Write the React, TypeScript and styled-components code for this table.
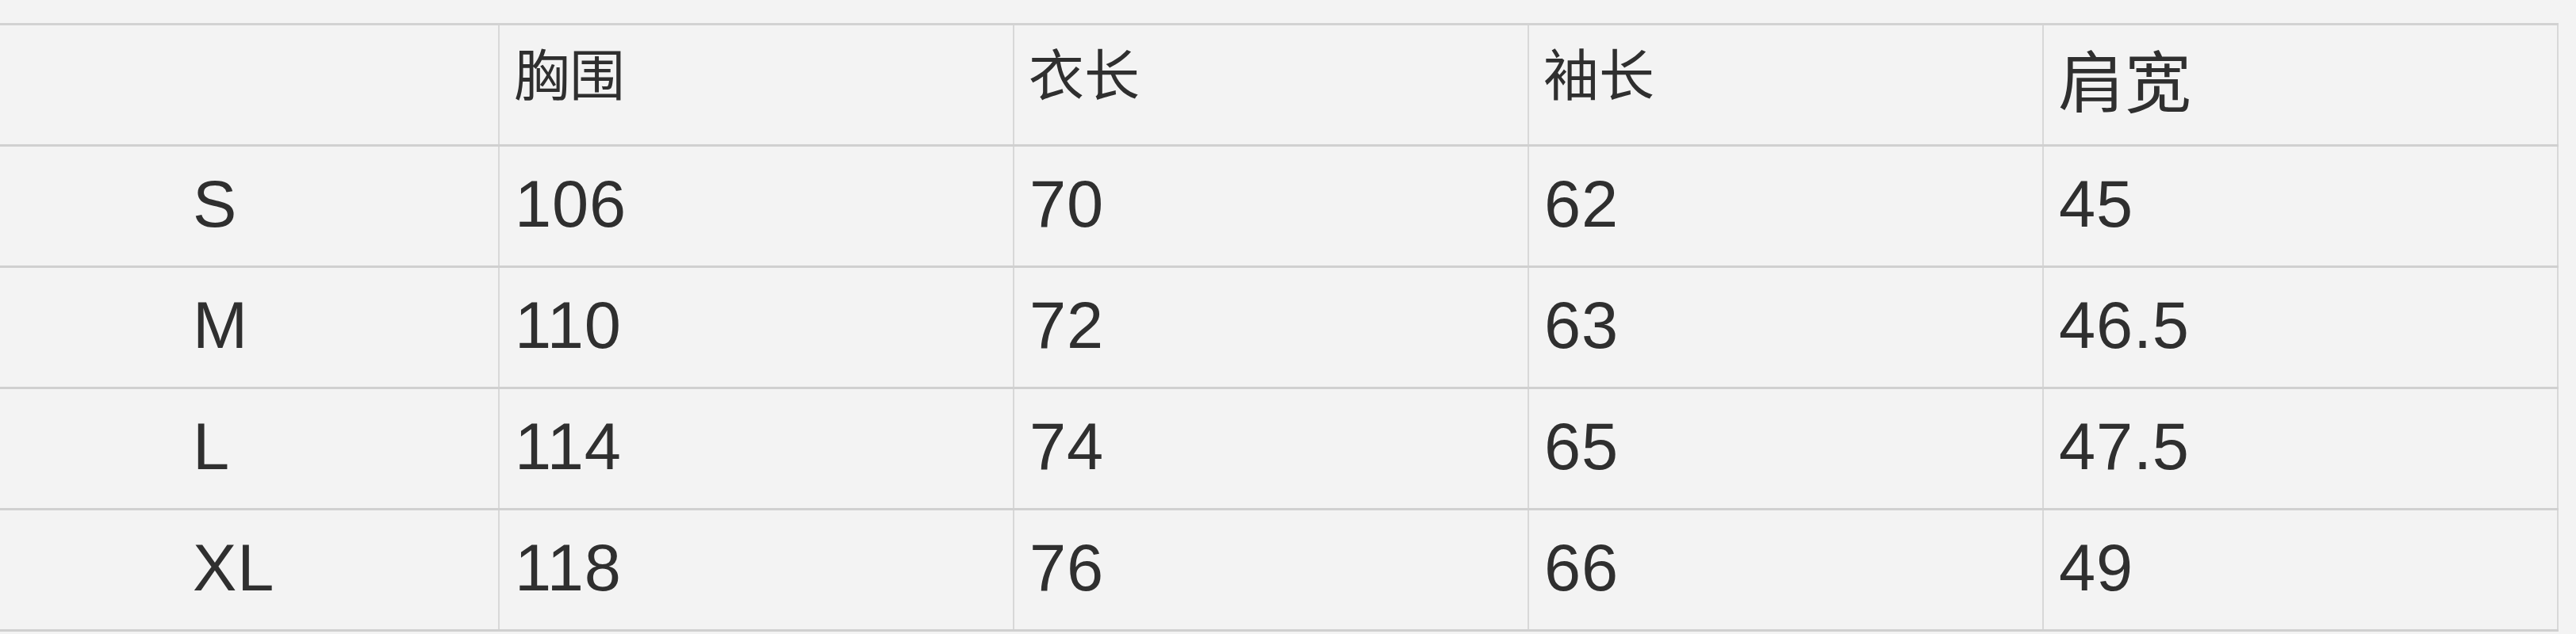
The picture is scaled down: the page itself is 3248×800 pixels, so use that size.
import React from 'react';
import styled, {createGlobalStyle} from 'styled-components';

const GlobalStyle = createGlobalStyle`
  html, body {
    margin: 0;
    padding: 0;
    background: #f3f3f3;
  }
  body {
    font-family: "Liberation Sans", "Noto Sans CJK SC", sans-serif;
    color: #2f2f2f;
  }
`;

const Sheet = styled.div`
  width: 3248px;
  height: 800px;
  padding-top: 29px;
  box-sizing: border-box;
  background: #f3f3f3;
  overflow: hidden;
`;

const Table = styled.div`
  width: 3226px;
  border-top: 3px solid #d2d2d2;
  display: flex;
  flex-direction: column;
`;

const Row = styled.div`
  display: grid;
  grid-template-columns: 630px repeat(4, 649px);
  height: 153px;
  box-sizing: border-box;
  border-bottom: 3px solid #d0d0d0;
`;

const Cell = styled.div<{$first?: boolean}>`
  display: flex;
  align-items: center;
  box-sizing: border-box;
  border-right: 2px solid #d8d8d8;
  padding-left: ${p => (p.$first ? '243px' : '19px')};
  padding-bottom: 4px;
  font-size: 83px;
  letter-spacing: 0.8px;
`;

const HeadCell = styled(Cell)<{$big?: boolean}>`
  font-family: "Noto Sans CJK SC", "Liberation Sans", sans-serif;
  font-size: ${p => (p.$big ? '84px' : '70px')};
  padding-bottom: ${p => (p.$big ? '18px' : '34px')};
  padding-left: ${p => (p.$first ? '243px' : '18px')};
  letter-spacing: 0;
`;

const headers = ['胸围', '衣长', '袖长', '肩宽'];

const rows = [
  ['S', '106', '70', '62', '45'],
  ['M', '110', '72', '63', '46.5'],
  ['L', '114', '74', '65', '47.5'],
  ['XL', '118', '76', '66', '49'],
];

export default function App() {
  return (
    <>
      <GlobalStyle />
      <Sheet>
        <Table>
          <Row>
            <HeadCell $first />
            {headers.map((h, i) => (
              <HeadCell key={h} $big={i === 3}>
                {h}
              </HeadCell>
            ))}
          </Row>
          {rows.map(r => (
            <Row key={r[0]}>
              {r.map((v, i) => (
                <Cell key={i} $first={i === 0}>
                  {v}
                </Cell>
              ))}
            </Row>
          ))}
        </Table>
      </Sheet>
    </>
  );
}
